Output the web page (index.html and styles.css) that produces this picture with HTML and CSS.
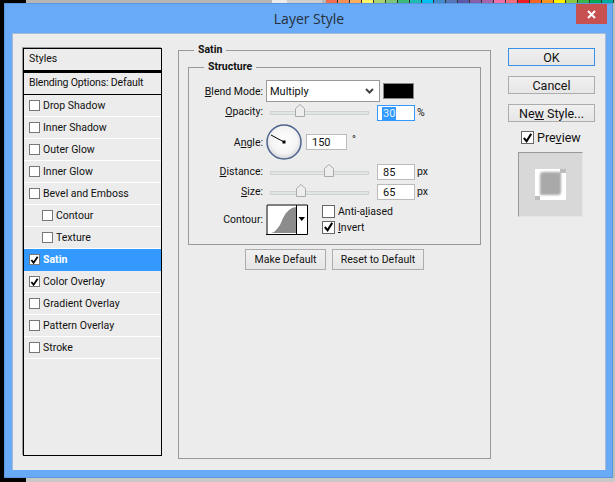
FILE: index.html
```html
<!DOCTYPE html>
<html lang="en">
<head>
<meta charset="utf-8">
<title>Layer Style</title>
<link rel="stylesheet" href="styles.css">
</head>
<body>
<div class="desktop">
  <div class="topstrip">
    <span class="ts-black"></span><span class="ts-grey"></span><span class="ts-white"></span><span class="ts-light"></span>
    <div class="swatches">
      <i class="c1"></i><i class="c2"></i><i class="c3"></i><i class="c4"></i><i class="c5"></i><i class="c6"></i><i class="c7"></i><i class="c8"></i><i class="c9"></i><i class="c10"></i><i class="c11"></i><i class="c12"></i><i class="c13"></i><i class="c14"></i><i class="c15"></i><i class="c16"></i><i class="c17"></i><i class="c18"></i><i class="c19"></i><i class="c20"></i><i class="c21"></i><i class="c22"></i><i class="c23"></i><i class="c24"></i>
    </div>
  </div>
  <div class="middle">
    <div class="leftstrip"></div>
    <div class="window">
      <header class="titlebar">
        <h1 class="title">Layer Style</h1>
        <div class="close"><svg width="9" height="9" viewBox="0 0 9 9"><path d="M1 1L8 8M8 1L1 8" stroke="#fff" stroke-width="2"/></svg></div>
      </header>
      <div class="dialog">
        <nav class="styles">
          <div class="styles-head">Styles</div>
          <div class="styles-blend">Blending Options: Default</div>
          <div class="item"><span class="check"></span>Drop Shadow</div>
          <div class="item"><span class="check"></span>Inner Shadow</div>
          <div class="item"><span class="check"></span>Outer Glow</div>
          <div class="item"><span class="check"></span>Inner Glow</div>
          <div class="item"><span class="check"></span>Bevel and Emboss</div>
          <div class="item nested"><span class="check"></span>Contour</div>
          <div class="item nested"><span class="check"></span>Texture</div>
          <div class="item selected"><span class="check"><svg width="10" height="10" viewBox="0 0 10 10"><path d="M1.500 5L4 8L8.500 1.500" fill="none" stroke="#000" stroke-width="2"/></svg></span>Satin</div>
          <div class="item"><span class="check"><svg width="10" height="10" viewBox="0 0 10 10"><path d="M1.500 5L4 8L8.500 1.500" fill="none" stroke="#000" stroke-width="2"/></svg></span>Color Overlay</div>
          <div class="item"><span class="check"></span>Gradient Overlay</div>
          <div class="item"><span class="check"></span>Pattern Overlay</div>
          <div class="item"><span class="check"></span>Stroke</div>
        </nav>

        <fieldset class="group satin">
          <legend class="legend legend-satin">Satin</legend>
          <fieldset class="group structure">
            <legend class="legend">Structure</legend>
            <div class="row row-blend">
              <span class="label"><u>B</u>lend Mode:</span>
              <div class="select"><span>Multiply</span>
                <svg class="chev" width="9" height="6" viewBox="0 0 9 6"><path d="M1 1L4.500 4.500L8 1" fill="none" stroke="#444" stroke-width="2"/></svg>
              </div>
              <div class="swatch"></div>
            </div>
            <div class="row row-slider row-opacity">
              <span class="label"><u>O</u>pacity:</span>
              <div class="slider"><svg class="thumb thumb-opacity" width="10" height="13" viewBox="0 0 10 13"><path d="M.5 12.500V4.500L5 .5L9.500 4.500V12.500Z" fill="#eee" stroke="#aaa"/></svg></div>
              <div class="field focused"><span class="sel">30</span></div>
              <span class="unit">%</span>
            </div>
            <div class="row row-angle">
              <span class="label">A<u>n</u>gle:</span>
              <svg class="dial" width="36" height="36" viewBox="0 0 36 36">
                <defs><radialGradient id="dialfill" cx="50%" cy="45%" r="55%"><stop offset="0%" stop-color="#fff"/><stop offset="70%" stop-color="#f4f4f4"/><stop offset="100%" stop-color="#d4d4d4"/></radialGradient></defs>
                <circle cx="18" cy="18" r="17" fill="url(#dialfill)" stroke="#4f6590" stroke-width="1.500"/>
                <path d="M5 11L18 18" stroke="#000" stroke-width="1"/>
                <rect x="16.500" y="16.500" width="3" height="3" fill="#000"/>
              </svg>
              <div class="field field-angle">150</div>
              <span class="degree">°</span>
            </div>
            <div class="row row-slider row-distance">
              <span class="label"><u>D</u>istance:</span>
              <div class="slider"><svg class="thumb thumb-distance" width="10" height="13" viewBox="0 0 10 13"><path d="M.5 12.500V4.500L5 .5L9.500 4.500V12.500Z" fill="#eee" stroke="#aaa"/></svg></div>
              <div class="field">85</div>
              <span class="unit">px</span>
            </div>
            <div class="row row-slider row-size">
              <span class="label"><u>S</u>ize:</span>
              <div class="slider"><svg class="thumb thumb-size" width="10" height="13" viewBox="0 0 10 13"><path d="M.5 12.500V4.500L5 .5L9.500 4.500V12.500Z" fill="#eee" stroke="#aaa"/></svg></div>
              <div class="field">65</div>
              <span class="unit">px</span>
            </div>
            <div class="row row-contour">
              <span class="label">Contour:</span>
              <svg class="contour" width="42" height="31" viewBox="0 0 42 31">
                <rect x="0" y="0" width="42" height="31" fill="#fff"/>
                <path d="M2 29H5L8 28L11 25L14 21L17 14L20 9L23 6L26 4L30 3V29Z" fill="#8c8c8c"/>
                <path d="M1 30.500V1H41.500V30.500H0M30.500 1V30" fill="none" stroke="#000" stroke-width="1"/>
                <path d="M32.500 13H39L35.750 17Z" fill="#000"/>
              </svg>
              <div class="contour-opts">
                <div class="opt"><span class="check check-lg"></span><span>Anti-a<u>l</u>iased</span></div>
                <div class="opt"><span class="check check-lg"><svg width="12" height="12" viewBox="0 0 12 12"><path d="M2 6L5 9.500L10 1.500" fill="none" stroke="#000" stroke-width="2.200"/></svg></span><span><u>I</u>nvert</span></div>
              </div>
            </div>
          </fieldset>
          <div class="defaults">
            <div class="btn btn-make">Make Default</div>
            <div class="btn btn-reset">Reset to Default</div>
          </div>
        </fieldset>

        <aside class="actions">
          <div class="btn btn-main btn-ok">OK</div>
          <div class="btn btn-main">Cancel</div>
          <div class="btn btn-main"><span>Ne<u>w</u> Style...</span></div>
          <div class="preview-check"><span class="check check-lg"><svg width="12" height="12" viewBox="0 0 12 12"><path d="M2 6L5 9.500L10 1.500" fill="none" stroke="#000" stroke-width="2.200"/></svg></span><span>Pre<u>v</u>iew</span></div>
          <div class="preview">
            <svg width="31" height="31" viewBox="0 0 31 31">
              <defs><filter id="soft" x="-30%" y="-30%" width="160%" height="160%"><feGaussianBlur stdDeviation="1.300"/></filter></defs>
              <rect width="31" height="31" fill="#fff"/>
              <path d="M7 3H26L26 24L24 26H5L5 5Z" fill="#a9a9a9" filter="url(#soft)"/>
              <path d="M0 31V27H5L5 31ZM25 0H31V4H25Z" fill="#bdbdbd"/>
            </svg>
          </div>
        </aside>
      </div>
    </div>
    <div class="rightstrip"></div>
  </div>
  <div class="bottomstrip"><span class="bs-black"></span></div>
</div>
</body>
</html>
```
FILE: styles.css
```css
* { box-sizing: border-box; }
html, body { margin: 0; padding: 0; }
body {
  width: 615px;
  height: 482px;
  overflow: hidden;
  font-family: Roboto, "Noto Sans", sans-serif;
  font-size: 10.5px;
  color: #111;
  background: #bdbdbd;
}
.desktop { display: flex; flex-direction: column; width: 615px; height: 482px; }

/* Background strips */
.topstrip { display: flex; height: 3px; flex: none; background: #b8b8b8; }
.ts-black { width: 26px; background: #000; }
.ts-grey { width: 246px; background: #b6b6b6; }
.ts-white { width: 15px; background: #ececec; }
.ts-light { width: 35px; background: #cfcfcf; }
.swatches { display: flex; margin-left: 4px; }
.swatches i { display: block; width: 12px; border-right: 1px solid #333; }
.c1 { background: #f26c4f; } .c2 { background: #f68e56; } .c3 { background: #fbaf5d; }
.c4 { background: #fff568; } .c5 { background: #acd372; } .c6 { background: #7cc576; }
.c7 { background: #3cb878; } .c8 { background: #1cbbb4; } .c9 { background: #00bff3; }
.c10 { background: #448ccb; } .c11 { background: #5574b9; } .c12 { background: #5c5aa8; }
.c13 { background: #855fa8; } .c14 { background: #a864a8; } .c15 { background: #f06eaa; }
.c16 { background: #f26d7d; } .c17 { background: #ed1c24; } .c18 { background: #f26522; }
.c19 { background: #f7941d; } .c20 { background: #fff200; } .c21 { background: #8dc63f; }
.c22 { background: #39b54a; } .c23 { background: #00a651; } .c24 { background: #00a99d; }

.middle { display: flex; height: 475px; flex: none; }
.leftstrip { width: 4px; background: #000; }
.rightstrip { width: 2px; background: #bdbdbd; }
.bottomstrip { flex: 1; background: #c8c8c8; }
.bs-black { display: block; width: 26px; height: 100%; background: #000; }

/* Window */
.window {
  width: 609px;
  display: flex;
  flex-direction: column;
  background: #69aaf6;
  padding: 0 7px 8px 8px;
  box-shadow: inset 0 0 0 1px #5b96dc;
}
.titlebar { height: 30px; flex: none; display: flex; justify-content: center; position: relative; }
.title {
  margin: 6px 0 0;
  font-family: "Open Sans", sans-serif;
  font-size: 14px;
  line-height: 19px;
  font-weight: 400;
  color: #26303c;
}
.close {
  position: absolute;
  top: 1px;
  right: -1px;
  width: 31px;
  height: 20px;
  background: #c75050;
  display: flex;
  align-items: center;
  justify-content: center;
}
.dialog {
  flex: 1;
  display: flex;
  align-items: flex-start;
  background: #ececec;
  border: 1px solid #a6bcd4;
  border-width: 1px 1px 0 1px;
  padding: 14px 0 0 10px;
}

/* Styles list */
.styles {
  width: 139px;
  height: 408px;
  flex: none;
  border: 1px solid #000;
  box-shadow: -1px -1px 0 #999;
}
.styles-head {
  height: 24px;
  padding: 1px 0 0 5px;
  line-height: 18px;
  border-bottom: 3px solid #000;
  border-image: linear-gradient(#000 33%, #999 33%, #999 67%, #000 67%) 3;
}
.styles-blend {
  height: 22px;
  padding-left: 5px;
  line-height: 20px;
  letter-spacing: -0.16px;
  border-bottom: 1px solid #000;
}
.item {
  height: 22px;
  display: flex;
  align-items: center;
  gap: 3px;
  padding-left: 5px;
  border-bottom: 1px solid #fff;
}
.item.nested { padding-left: 18px; }
.item.selected {
  background: #3399ff;
  color: #fff;
  font-weight: 700;
  border-bottom-color: #3399ff;
}
.check {
  width: 11px;
  height: 11px;
  flex: none;
  background: #fff;
  border: 1px solid #777;
  display: flex;
  align-items: center;
  justify-content: center;
}
.check-lg { width: 13px; height: 13px; border-color: #666; }

/* Fieldsets */
.group { margin: 0; min-width: 0; border: 1px solid #999; }
.legend {
  padding: 0 4px;
  margin-left: 15px;
  font-weight: 700;
  line-height: 14px;
}
.legend-satin { margin-left: 6px; }
.satin {
  width: 313px;
  height: 416px;
  flex: none;
  margin: -5px 0 0 16px;
  padding: 3px 9px 0;
}
.structure { width: 293px; height: 185px; padding: 6px 0 0; }
.row { display: flex; align-items: center; }
.label { width: 74px; flex: none; text-align: right; }
.row-blend { height: 22px; }
.select {
  width: 114px;
  height: 22px;
  margin-left: 3px;
  padding: 0 5px 0 3px;
  background: #fff;
  border: 1px solid #999;
  display: flex;
  align-items: center;
  justify-content: space-between;
  font-size: 11px;
}
.swatch { width: 31px; height: 16px; margin-left: 3px; background: #000; border: 1px solid #888; }
.row-slider { height: 16px; margin-top: 3px; }
.row-opacity .label { margin-top: -4px; }
.slider {
  width: 99px;
  height: 4px;
  margin-left: 7px;
  background: #e2e6e2;
  border: 1px solid #d0d4d0;
  position: relative;
}
.row-distance .slider, .row-size .slider { margin-top: 1px; }
.row-distance .label, .row-size .label { margin-top: -1px; }
.thumb { position: absolute; top: -8px; }
.thumb-opacity { left: 24px; }
.thumb-distance { left: 53px; }
.thumb-size { left: 25px; }
.field {
  width: 38px;
  height: 16px;
  margin-left: 8px;
  padding-left: 5px;
  background: #fff;
  border: 1px solid #bbb;
  line-height: 15px;
  font-size: 11px;
}
.field.focused { border-color: #3399ff; padding-left: 4px; }
.sel { display: inline-block; height: 13px; line-height: 13px; background: #3399ff; color: #dfefff; padding: 0 1px; }
.unit { margin-left: 2px; position: relative; top: -1px; }
.row-angle { height: 36px; margin-top: 3px; }
.dial { margin-left: 3px; flex: none; }
.field-angle { width: 41px; margin-left: 4px; }
.degree { margin-left: 5px; margin-top: -6px; }
.row-distance, .row-size { margin-top: 4px; }
.row-contour { height: 32px; margin-top: 3px; }
.contour { margin-left: 3px; flex: none; }
.contour-opts { margin-left: 14px; display: flex; flex-direction: column; gap: 3px; }
.opt { display: flex; align-items: center; gap: 3px; height: 13px; }

/* Buttons */
.btn {
  display: flex;
  align-items: center;
  justify-content: center;
  border: 1px solid #adadad;
  background: linear-gradient(#f0f0f0, #e6e6e6);
}
.defaults { display: flex; gap: 6px; margin-top: 4px; padding-left: 57px; }
.btn-make { width: 81px; height: 21px; }
.btn-reset { width: 92px; height: 21px; }
.actions { width: 87px; flex: none; margin-left: 17px; display: flex; flex-direction: column; }
.btn-main { width: 87px; height: 18px; margin-bottom: 10px; font-size: 12.5px; }
.btn-ok { border-color: #3a8fe8; }
.preview-check { display: flex; align-items: center; gap: 3px; margin: -1px 0 0 13px; height: 13px; font-size: 12.5px; }
.preview {
  width: 65px;
  height: 65px;
  margin: 8px 0 0 10px;
  background: #d8d8d8;
  border: 1px solid #e6e6e6;
  border-top-color: #999;
  border-left-color: #999;
  display: flex;
  align-items: center;
  justify-content: center;
}
```
